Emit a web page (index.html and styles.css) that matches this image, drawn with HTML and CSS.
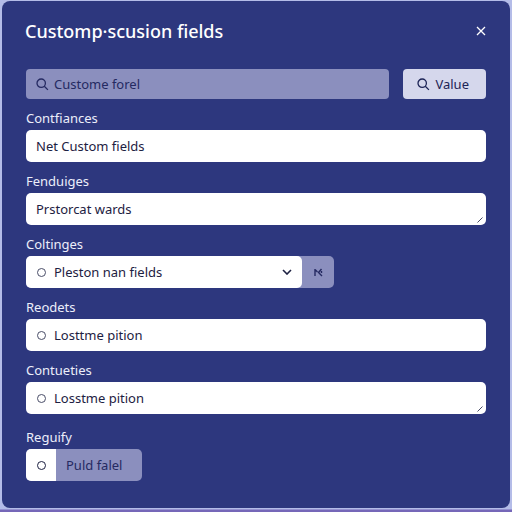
FILE: index.html
```html
<!DOCTYPE html>
<html lang="en">
<head>
    <meta charset="UTF-8">
    <meta name="viewport" content="width=device-width, initial-scale=1.0">
    <title>Custom fields</title>
    <link rel="stylesheet" href="styles.css">
</head>
<body>

<main class="dialog">
    <header class="dialog-header">
        <h1>Customp·scusion fields</h1>
        <button class="close" type="button" aria-label="Close">
            <svg width="10" height="10" viewBox="0 0 10 10"><path d="M1 1l8 8M9 1l-8 8"/></svg>
        </button>
    </header>

    <form class="form">
        <div class="search-row">
            <div class="search">
                <svg class="icon" width="13" height="13" viewBox="0 0 13 13"><circle cx="5.2" cy="5.2" r="4.2"/><path d="M8.3 8.3l3.6 3.6"/></svg>
                <input type="text" value="Custome forel" aria-label="Search fields">
            </div>
            <button class="value-button" type="button">
                <svg class="icon" width="13" height="13" viewBox="0 0 13 13"><circle cx="5.2" cy="5.2" r="4.2"/><path d="M8.3 8.3l3.6 3.6"/></svg>
                Value
            </button>
        </div>

        <div class="group">
            <label for="confiances">Contfiances</label>
            <div class="field">
                <input type="text" id="confiances" value="Net Custom fields">
            </div>
        </div>

        <div class="group">
            <label for="fenduiges">Fenduiges</label>
            <div class="field">
                <textarea id="fenduiges" rows="1">Prstorcat wards</textarea>
                <svg class="grip" width="6" height="6" viewBox="0 0 6 6"><path d="M.5 5.5l5-5"/></svg>
            </div>
        </div>

        <div class="group">
            <label for="coltinges">Coltinges</label>
            <div class="select-row">
                <div class="field">
                    <span class="dot"></span>
                    <select id="coltinges">
                        <option>Pleston nan fields</option>
                    </select>
                    <svg class="chevron" width="10" height="6" viewBox="0 0 10 6"><path d="M1 1l4 4 4-4"/></svg>
                </div>
                <button class="addon" type="button" aria-label="First">
                    <svg width="9" height="9" viewBox="0 0 9 9"><path d="M1 1v7M1.5 2l2 2M7.5 1L4.5 4.5 8 8M7.5 3v2"/></svg>
                </button>
            </div>
        </div>

        <div class="group">
            <label for="reodets">Reodets</label>
            <div class="field">
                <span class="dot"></span>
                <input type="text" id="reodets" value="Losttme pition">
            </div>
        </div>

        <div class="group">
            <label for="contueties">Contueties</label>
            <div class="field">
                <span class="dot"></span>
                <textarea id="contueties" rows="1">Losstme pition</textarea>
                <svg class="grip" width="6" height="6" viewBox="0 0 6 6"><path d="M.5 5.5l5-5"/></svg>
            </div>
        </div>

        <div class="group group-last">
            <label for="reguify">Reguify</label>
            <div class="toggle">
                <span class="toggle-mark"><input type="radio" class="dot" id="reguify"></span>
                <button class="toggle-button" type="button">Puld falel</button>
            </div>
        </div>
    </form>
</main>

</body>
</html>
```

FILE: styles.css
```css
* {
    box-sizing: border-box;
}
body {
    margin: 0;
    min-height: 100vh;
    display: flex;
    padding: 1px 2px 4px;
    background: linear-gradient(to top, #7567b8 0, #7567b8 2px, #b4bce8 3px);
    font-family: "Noto Sans", sans-serif;
    font-size: 13px;
    line-height: 20px;
    color: #1d2142;
}
input, textarea, select, button {
    font: inherit;
    color: inherit;
    border: 0;
    margin: 0;
    padding: 0;
    background: none;
    outline: 0;
}
svg {
    fill: none;
    stroke: currentColor;
    flex: none;
}
.dialog {
    flex: 1;
    padding: 16px 24px 16px 23px;
    border-radius: 8px;
    background: #2d377e;
}
.dialog-header {
    display: flex;
    align-items: center;
    justify-content: space-between;
    color: #fff;
}
h1 {
    margin: 0;
    font-size: 18px;
    line-height: 28px;
    font-weight: 500;
}
.close {
    display: flex;
    cursor: pointer;
}
.close svg {
    stroke-width: 1.3;
}
.form {
    padding-left: 1px;
}
.search-row {
    display: flex;
    gap: 14px;
    margin-top: 24px;
}
.search, .value-button {
    display: flex;
    align-items: center;
    height: 30px;
    border-radius: 4px;
}
.search {
    flex: 1;
    gap: 5px;
    padding: 0 10px;
    background: #8b8fbe;
    color: #252a62;
}
.search input {
    flex: 1;
    min-width: 0;
}
.icon {
    stroke-width: 1.3;
}
.value-button {
    gap: 5px;
    padding: 0 17px 0 14px;
    background: #d5d7ec;
    color: #1d2456;
    cursor: pointer;
}
.group {
    margin-top: 9px;
}
.group-last {
    margin-top: 13px;
}
.group label {
    display: block;
    height: 22px;
    color: #eceefa;
}
.field {
    position: relative;
    display: flex;
    align-items: center;
    gap: 7px;
    height: 32px;
    padding: 0 10px;
    border-radius: 5px;
    background: #fff;
}
.field input, .field textarea, .field select {
    flex: 1;
    min-width: 0;
    height: 20px;
    appearance: none;
    resize: none;
    overflow: hidden;
}
.dot {
    flex: none;
    width: 9px;
    height: 9px;
    margin: 0 1px;
    border: 1px solid #4a4e68;
    border-radius: 50%;
}
.grip {
    position: absolute;
    right: 3px;
    bottom: 2px;
    color: #4a4e68;
}
.chevron {
    stroke-width: 1.6;
}
.select-row {
    display: flex;
    width: 67%;
    border-radius: 5px;
    background: #8b8fbe;
}
.select-row .field {
    flex: 1;
}
.addon {
    display: flex;
    align-items: center;
    justify-content: center;
    width: 32px;
    color: #252a62;
    cursor: pointer;
}
.addon svg {
    stroke-width: 1.4;
}
.toggle {
    display: inline-flex;
    height: 32px;
    border-radius: 5px;
    overflow: hidden;
    background: #8b8fbe;
}
.toggle-mark {
    display: flex;
    align-items: center;
    justify-content: center;
    width: 30px;
    background: #fff;
}
.toggle .dot {
    appearance: none;
    border-color: #1d2142;
}
.toggle-button {
    padding: 0 20px 0 10px;
    color: #252a62;
    cursor: pointer;
}
```
